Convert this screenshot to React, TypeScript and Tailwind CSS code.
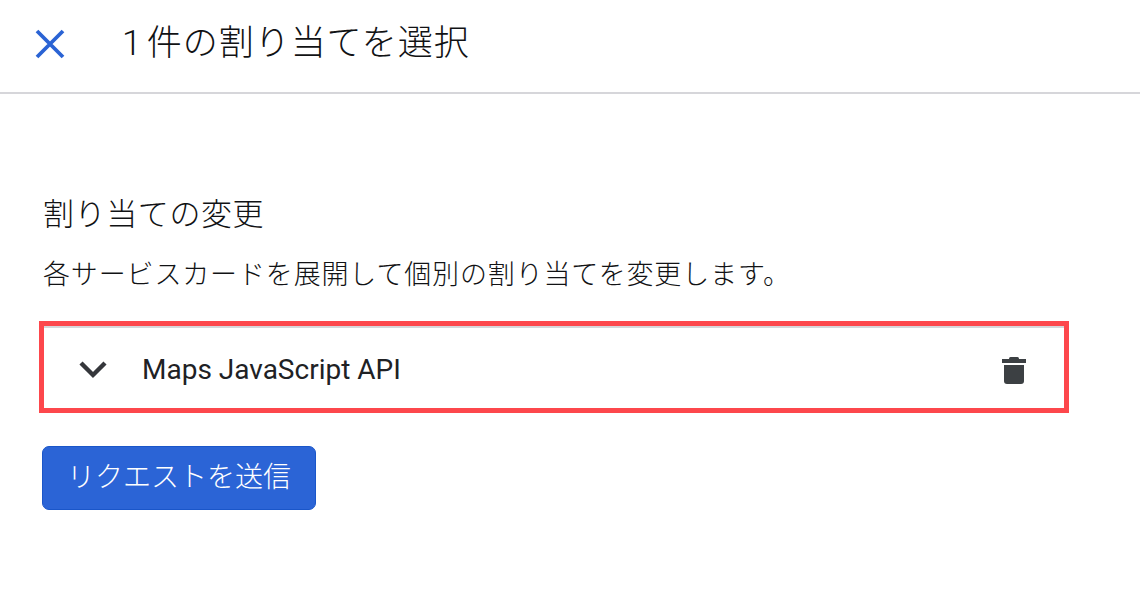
import React from 'react'

const CJK = 'font-["Roboto","Noto_Sans_CJK_JP",sans-serif]'

const App: React.FC = () => {
  return (
    <div className={`w-[1140px] h-[598px] bg-white overflow-hidden ${CJK}`}>
      <div className="h-[94px] border-b-2 border-[#d6d6da] flex items-center pb-[5px]">
        <button className="ml-[30px] w-[40px] h-[40px] flex items-center justify-center text-[#2a63d4]">
          <svg width="40" height="40" viewBox="0 0 40 40" fill="none" stroke="currentColor" strokeWidth="3.8">
            <path d="M7 7 L33 33 M33 7 L7 33" />
          </svg>
        </button>
        <h1 className="ml-[52px] text-[35px] leading-none font-light text-[#111214] tracking-[0.95px] [word-spacing:-5px]">1 件の割り当てを選択</h1>
      </div>

      <div className="pl-[39px] w-[1069px]">
        <h2 className="mt-[102px] ml-[4px] text-[31px] leading-[38px] font-light text-[#111214] tracking-[0.6px]">割り当ての変更</h2>
        <p className="mt-[25px] ml-[4px] text-[27px] leading-[32px] font-light text-[#111214] tracking-[0.85px]">各サービスカードを展開して個別の割り当てを変更します。</p>

        <div className="mt-[30px] h-[92px] border-[5px] border-[#fd474c]">
          <div className="w-full h-full border-t-2 border-[#d6d6da] pt-[3px] flex items-center">
            <svg className="ml-[32px] text-[#35373b]" width="34" height="34" viewBox="0 0 34 34" fill="none" stroke="currentColor" strokeWidth="4.4">
              <path d="M5 10 L17 22 L29 10" />
            </svg>
            <span className="ml-[32px] text-[28px] font-normal text-[#202124]">Maps JavaScript API</span>
            <svg className="ml-auto mr-[33px]" width="34" height="34" viewBox="0 0 34 34" fill="#3c4043">
              <rect x="12" y="4" width="10" height="3" rx="1.500" />
              <rect x="5" y="6" width="24" height="4" />
              <path d="M7 12h20v16a3 3 0 0 1-3 3H10a3 3 0 0 1-3-3z" />
            </svg>
          </div>
        </div>

        <button className="mt-[33px] ml-[3px] w-[274px] h-[64px] rounded-[7px] bg-[#2b64d6] border border-[#1a56c9] text-white text-[28px] font-light flex items-center justify-center">
          リクエストを送信
        </button>
      </div>
    </div>
  )
}

export default App
